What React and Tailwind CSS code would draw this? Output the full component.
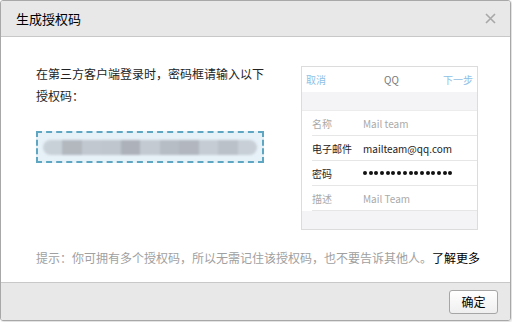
import React from 'react'

const font = { fontFamily: '"Noto Sans CJK SC", "Liberation Sans", sans-serif' }

// blurred stand-in for the auth code
const codeBlocks = ['#c9d1d8', '#b3b8bf', '#c2c8cf', '#bfc6cd', '#adb2ba', '#c3cad1', '#b7bdc4', '#b2b7bf', '#c5ccd3', '#bbc1c8', '#c8cfd6']

function Row({ label, value, dark, children }) {
	return (
		<div className="h-[25px] flex items-center ml-[10px] border-b border-[#e6e6e6] text-[10px]">
			<span className={`w-[51px] ${dark ? 'text-[#222]' : 'text-[#aaa]'}`}>{label}</span>
			{children || <span className={dark ? 'text-[#222]' : 'text-[#aaa]'}>{value}</span>}
		</div>
	)
}

function PhonePreview() {
	return (
		<div className="w-[177px] h-[164px] mt-[3px] border border-[#dcdcdc] bg-white flex flex-col shrink-0">
			<div className="h-[25px] flex items-center justify-between px-[4px] text-[10px]">
				<span className="text-[#8ec0e6]">取消</span>
				<span className="text-[#777] ml-[14px]">QQ</span>
				<span className="text-[#8ec0e6]">下一步</span>
			</div>
			<div className="h-[19px] bg-[#f4f4f6] border-b border-[#ececec]"></div>
			<Row label="名称" value="Mail team" />
			<Row label="电子邮件" value="mailteam@qq.com" dark />
			<Row label="密码" dark>
				<div className="flex gap-[1.7px]">
					{Array.from({ length: 16 }).map((_, i) => (
						<span key={i} className="w-[4px] h-[4px] rounded-full bg-[#111]"></span>
					))}
				</div>
			</Row>
			<Row label="描述" value="Mail Team" />
			<div className="flex-1 bg-[#f4f4f6]"></div>
		</div>
	)
}

export default function App() {
	return (
		<div className="w-[512px] h-[322px] bg-white" style={font}>
			<div className="w-[511px] h-[321px] border border-[#a8a8a8] rounded-[3px] flex flex-col overflow-hidden shadow-[1px_1px_2px_rgba(0,0,0,0.15)]">
				{/* header */}
				<div className="h-[36px] shrink-0 bg-[#e8e8e8] border-b border-[#c8c8c8] flex items-center justify-between pl-[15px] pr-[13px]">
					<span className="text-[13px] text-black">生成授权码</span>
					<svg width="11" height="11" viewBox="0 0 11 11" className="mr-[1px]">
						<path d="M1 1L10 10M10 1L1 10" stroke="#a8a8a8" strokeWidth="1.6" />
					</svg>
				</div>

				{/* body */}
				<div className="flex-1 pl-[35px] pt-[26px]">
					<div className="flex gap-[37px]">
						<div className="w-[228px] shrink-0">
							<p className="text-[12px] leading-[22px] text-[#222] whitespace-nowrap">在第三方客户端登录时，密码框请输入以下<br />授权码：</p>
							<div className="mt-[24px] h-[32px] border-2 border-dashed border-[#5ea6c2] bg-[#e7f1f8] flex items-center px-[5px]">
								<div className="flex-1 h-[15px] rounded-full overflow-hidden flex blur-[1px]">
									{codeBlocks.map((c, i) => (
										<div key={i} className="flex-1 h-full" style={{ background: c }}></div>
									))}
								</div>
							</div>
						</div>
						<PhonePreview />
					</div>
					<p className="mt-[20px] text-[12px] leading-[16px] text-[#a0a0a0] whitespace-nowrap">
						提示：你可拥有多个授权码，所以无需记住该授权码，也不要告诉其他人。<span className="text-black">了解更多</span>
					</p>
				</div>

				{/* footer */}
				<div className="h-[38px] shrink-0 bg-[#e8e8e8] border-t border-[#c8c8c8] flex items-center justify-end pr-[12px]">
					<button className="w-[49px] h-[24px] border border-[#a6a6a6] rounded-[3px] bg-gradient-to-b from-white to-[#efefef] text-[12px] text-black">确定</button>
				</div>
			</div>
		</div>
	)
}
